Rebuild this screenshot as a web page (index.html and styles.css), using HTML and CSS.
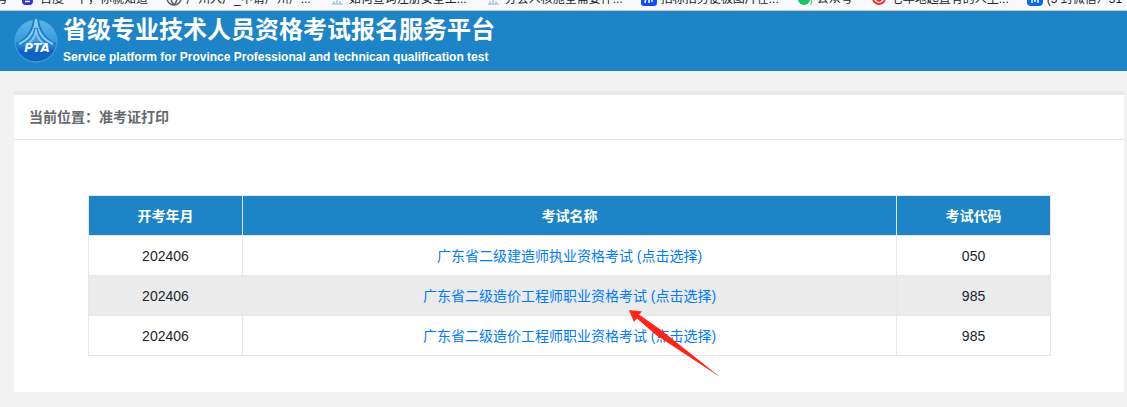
FILE: index.html
```
<!DOCTYPE html>
<html lang="zh-CN">
<head>
    <meta charset="utf-8">
    <title>准考证打印</title>
    <link rel="stylesheet" href="styles.css">
</head>
<body>
    <nav class="bookmarks">
        <a href="#" class="bookmark first">号</a>
        <a href="#" class="bookmark">
            <svg width="16" height="16" viewBox="0 0 16 16"><rect x="2" y="6" width="11" height="9" rx="4" fill="#2932e1"/><path d="M5 11.500h5" stroke="#fff" stroke-width="1.5"/></svg>
            <span>百度一下，你就知道</span>
        </a>
        <a href="#" class="bookmark">
            <svg width="16" height="16" viewBox="0 0 16 16" fill="none" stroke="#5f6368" stroke-width="1.6"><circle cx="8" cy="8" r="7"/><path d="M1 8h14M8 1c-4 4-4 10 0 14c4-4 4-10 0-14"/></svg>
            <span>广州入户_申请广州户...</span>
        </a>
        <a href="#" class="bookmark">
            <svg width="16" height="16" viewBox="0 0 16 16" stroke="#a9cbe4" stroke-width="1.5"><path d="M3 14h11M5 11v3M8 10v4M11 11v3"/></svg>
            <span>如何查询注册安全工...</span>
        </a>
        <a href="#" class="bookmark">
            <svg width="16" height="16" viewBox="0 0 16 16" stroke="#a9cbe4" stroke-width="1.5"><path d="M3 14h11M5 11v3M8 10v4M11 11v3"/></svg>
            <span>分会人核施全需要件...</span>
        </a>
        <a href="#" class="bookmark">
            <svg width="16" height="16" viewBox="0 0 16 16"><rect width="16" height="16" rx="3" fill="#0b4dff"/><path d="M5 8l-1 5M8 8v5M11 9v3" stroke="#fff" stroke-width="1.5"/></svg>
            <span>招标招务便极图片在...</span>
        </a>
        <a href="#" class="bookmark">
            <svg width="16" height="16" viewBox="0 0 16 16"><circle cx="7" cy="9" r="6" fill="#16c566"/><path d="M12 9c4 1 3 5 1 6" stroke="#16c566" fill="none"/></svg>
            <span>公众号</span>
        </a>
        <a href="#" class="bookmark">
            <svg width="16" height="16" viewBox="0 0 16 16"><circle cx="8" cy="8" r="6" fill="#fff" stroke="#e33b36" stroke-width="2"/><circle cx="8" cy="9" r="3" fill="#e33b36"/></svg>
            <span>七年地起直有的人生...</span>
        </a>
        <a href="#" class="bookmark">
            <svg width="16" height="16" viewBox="0 0 16 16"><rect width="16" height="16" rx="4" fill="#0a67f5"/><path d="M5 10v3M8 10v2M11 10v3" stroke="#fff" stroke-width="1.5"/></svg>
            <span>(5 封微信）51</span>
        </a>
    </nav>

    <header class="header">
        <svg class="logo" viewBox="0 0 44 44" role="img" aria-label="PTA">
            <defs>
                <linearGradient id="globe" x1="0" y1="0" x2="0" y2="1">
                    <stop offset="0" stop-color="#5cb6ea"/>
                    <stop offset="0.5" stop-color="#3a9be0"/>
                    <stop offset="0.75" stop-color="#0c62c8"/>
                    <stop offset="1" stop-color="#1464b4"/>
                </linearGradient>
            </defs>
            <circle cx="22" cy="22" r="21" fill="url(#globe)" stroke="#4ba6e2" stroke-width="1"/>
            <path d="M20 0C19 12 12 21 2 25M24 0C25 12 32 21 42 25" fill="none" stroke="#1b7fc8" stroke-width="2"/>
            <path d="M22 0C21 14 14 21 5 25M22 0C23 14 30 21 39 25" fill="none" stroke="#8dcdf4" stroke-width="2"/>
            <path d="M21 9C20 17 15 22 9 25M23 9C24 17 29 22 35 25" fill="none" stroke="#1f80cc" stroke-width="1.500"/>
            <path d="M22 10C22 17 18 22 14 25M22 10C22 17 26 22 30 25" fill="none" stroke="#8dcdf4" stroke-width="1.500"/>
            <text x="23" y="33" class="logo-text">PTA</text>
        </svg>
        <div class="title">
            <h1>省级专业技术人员资格考试报名服务平台</h1>
            <p>Service platform for Province Professional and technican qualification test</p>
        </div>
    </header>

    <main class="panel">
        <div class="location">当前位置：准考证打印</div>
        <div class="content">
            <table>
                <thead>
                    <tr>
                        <th class="narrow">开考年月</th>
                        <th>考试名称</th>
                        <th class="narrow">考试代码</th>
                    </tr>
                </thead>
                <tbody>
                    <tr>
                        <td>202406</td>
                        <td><a href="#">广东省二级建造师执业资格考试 (点击选择)</a></td>
                        <td>050</td>
                    </tr>
                    <tr>
                        <td>202406</td>
                        <td><a href="#">广东省二级造价工程师职业资格考试 (点击选择)</a></td>
                        <td>985</td>
                    </tr>
                    <tr>
                        <td>202406</td>
                        <td><a href="#">广东省二级造价工程师职业资格考试 (点击选择)</a></td>
                        <td>985</td>
                    </tr>
                </tbody>
            </table>
            <svg class="arrow" viewBox="0 0 92 68"><path d="M0 0L13 1.500L10 4.500L32 20L91 67L27 25L8 8.500L5 12Z" fill="#ff2414"/></svg>
        </div>
    </main>
</body>
</html>
```
FILE: styles.css
```
* {
    box-sizing: border-box;
}
body {
    margin: 0;
    background: #f2f2f2;
    font-family: "Liberation Sans", "Noto Sans CJK SC", sans-serif;
    font-size: 14px;
    line-height: 20px;
    color: #212529;
}
a {
    color: #007bff;
    text-decoration: none;
}

/* bookmarks bar */
.bookmarks {
    display: flex;
    align-items: flex-end;
    gap: 18px;
    height: 11px;
    padding-bottom: 4px;
    border-bottom: 1px solid #c8c8c8;
    background: #f9f9fd;
    overflow: hidden;
}
.bookmark {
    display: flex;
    flex-shrink: 0;
    align-items: flex-end;
    gap: 4px;
    font-size: 12px;
    line-height: 14px;
    color: #222;
    white-space: nowrap;
}
.first {
    width: 8px;
    margin-right: -6px;
    justify-content: flex-end;
}

/* header */
.header {
    display: flex;
    align-items: center;
    gap: 5px;
    height: 60px;
    padding-left: 14px;
    background: #1c84c7;
    color: #fff;
}
.logo {
    width: 44px;
    height: 44px;
}
.logo-text {
    fill: #fff;
    font-family: "DejaVu Sans", sans-serif;
    font-size: 12px;
    font-weight: bold;
    font-style: italic;
    text-anchor: middle;
}
.title {
    padding-bottom: 4px;
}
.title h1 {
    margin: 0;
    font-size: 24px;
    line-height: 36px;
}
.title p {
    margin: 0;
    font-size: 12px;
    font-weight: bold;
    line-height: 18px;
}

/* content panel */
.panel {
    margin: 20px 3px 15px 14px;
    border-top: 4px solid #e7eaec;
    background: #fff;
}
.location {
    padding: 12px 15px;
    border-bottom: 1px solid #e7e7e7;
    font-weight: bold;
    color: #676a6c;
}
.content {
    position: relative;
    padding: 55px 73px 36px 74px;
}
table {
    width: 100%;
    table-layout: fixed;
    border-collapse: collapse;
}
th, td {
    height: 40px;
    padding: 0;
    border: 1px solid #e7e7e7;
    text-align: center;
}
th {
    background: #1c84c7;
    color: #fff;
}
.narrow {
    width: 16%;
}
tbody tr:nth-child(even) {
    background: #ebebeb;
}

/* pointer over the second exam */
.arrow {
    position: absolute;
    top: 170px;
    left: 615px;
    width: 92px;
    height: 68px;
    pointer-events: none;
}
```
